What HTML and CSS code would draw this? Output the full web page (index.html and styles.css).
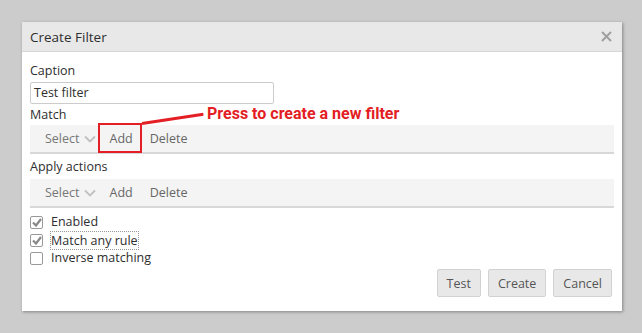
FILE: index.html
```html
<!DOCTYPE html>
<html>
<head>
<meta charset="utf-8">
<link rel="stylesheet" href="styles.css">
</head>
<body>
<div class="dialog">
  <div class="header">
    <span class="title">Create Filter</span>
    <svg class="close" width="11" height="11" viewBox="0 0 11 11"><path d="M1 1L10 10M10 1L1 10" stroke="#a0a0a0" stroke-width="2"/></svg>
  </div>
  <div class="body">
    <div class="label first">Caption</div>
    <div class="input">Test filter</div>
    <div class="label match">Match</div>
    <div class="toolbar">
      <span class="tb-select">Select <svg width="12" height="8" viewBox="0 0 12 8"><path d="M1 1.5L6 6.5L11 1.5" fill="none" stroke="#c0c0c0" stroke-width="1.8"/></svg></span>
      <span class="tb-item">Add</span>
      <span class="tb-item">Delete</span>
    </div>
    <div class="label apply">Apply actions</div>
    <div class="toolbar">
      <span class="tb-select">Select <svg width="12" height="8" viewBox="0 0 12 8"><path d="M1 1.5L6 6.5L11 1.5" fill="none" stroke="#c0c0c0" stroke-width="1.8"/></svg></span>
      <span class="tb-item">Add</span>
      <span class="tb-item">Delete</span>
    </div>
    <div class="checks">
      <div class="check"><span class="box"><svg width="10" height="9" viewBox="0 0 10 9"><path d="M1 4.5L4 7.5L9 1" fill="none" stroke="#888" stroke-width="2.2"/></svg></span><span>Enabled</span></div>
      <div class="check"><span class="box"><svg width="10" height="9" viewBox="0 0 10 9"><path d="M1 4.5L4 7.5L9 1" fill="none" stroke="#888" stroke-width="2.2"/></svg></span><span class="focus">Match any rule</span></div>
      <div class="check"><span class="box"></span><span>Inverse matching</span></div>
    </div>
    <div class="footer">
      <button class="btn">Test</button>
      <button class="btn">Create</button>
      <button class="btn">Cancel</button>
    </div>
  </div>
  <div class="callout-box"></div>
  <div class="callout-line"></div>
  <div class="callout-text">Press to create a new filter</div>
</div>
</body>
</html>
```
FILE: styles.css
```css
html, body {
  margin: 0;
  padding: 0;
  background: #cccccc;
}
body {
  padding: 22px;
  font-family: "Open Sans", "DejaVu Sans", sans-serif;
  font-size: 12px;
  color: #333;
}
.dialog {
  position: relative;
  width: 600px;
  height: 289px;
  background: #fff;
  box-shadow: 1px 1px 3px rgba(0,0,0,0.35);
  display: flex;
  flex-direction: column;
}
.header {
  height: 29px;
  background: #e8e8e8;
  border-bottom: 1px solid #d6d6d6;
  display: flex;
  align-items: center;
  justify-content: space-between;
  padding: 0 10px 0 8px;
}
.title {
  font-size: 13.5px;
  color: #2e2e2e;
}
.close {
  display: block;
  margin-top: -1px;
}
.body {
  padding: 0 8px;
  display: flex;
  flex-direction: column;
  flex: 1;
}
.label {
  line-height: 18px;
  font-size: 12.5px;
  color: #2e2e2e;
}
.label.first { margin-top: 10px; }
.label.match { margin-top: 2px; margin-bottom: 1px; }
.label.apply { margin-top: 4px; margin-bottom: 3px; }
.input {
  margin-top: 2px;
  width: 236px;
  height: 20px;
  border: 1px solid #ccc;
  border-radius: 2px;
  padding: 0 3px;
  line-height: 20px;
  font-size: 12.5px;
  color: #2e2e2e;
}
.toolbar {
  height: 27px;
  background: #f4f4f4;
  border-bottom: 2px solid #d8d8d8;
  display: flex;
  align-items: center;
  padding-left: 15px;
  font-size: 12.5px;
  color: #666;
}
.tb-select {
  color: #777;
  display: flex;
  align-items: center;
  gap: 4px;
  margin-right: 14px;
}
.tb-select svg { display: block; }
.tb-item {
  margin-right: 17px;
}
.checks {
  margin-top: 5px;
  display: flex;
  flex-direction: column;
}
.check {
  display: flex;
  align-items: center;
  line-height: 18px;
  height: 18px;
  font-size: 12.5px;
  color: #2e2e2e;
}
.box {
  width: 11px;
  height: 11px;
  border: 1px solid #999;
  border-radius: 2px;
  margin-right: 8px;
  display: flex;
  align-items: center;
  justify-content: center;
  background: #fff;
}
.box svg { display: block; margin-left: 1px; }
.focus {
  outline: 1px dotted #999;
  line-height: 17px;
}
.footer {
  margin-top: 2px;
  display: flex;
  justify-content: flex-end;
  gap: 7px;
  padding-right: 2px;
}
.btn {
  height: 28px;
  padding: 0 9px;
  background: #e8e8e8;
  border: 1px solid #d2d2d2;
  border-radius: 2px;
  font-family: "Open Sans", "DejaVu Sans", sans-serif;
  font-size: 12.5px;
  color: #555;
}
.callout-box {
  position: absolute;
  left: 76px;
  top: 101px;
  width: 40px;
  height: 26px;
  border: 2.5px solid #e31e24;
}
.callout-line {
  position: absolute;
  left: 120px;
  top: 100px;
  width: 62px;
  height: 2.5px;
  background: #e31e24;
  transform-origin: 0 50%;
  transform: rotate(-8.5deg);
}
.callout-text {
  position: absolute;
  left: 185px;
  top: 82px;
  font-family: Roboto, "Liberation Sans", sans-serif;
  font-weight: bold;
  font-size: 16px;
  color: #e31e24;
}
```
